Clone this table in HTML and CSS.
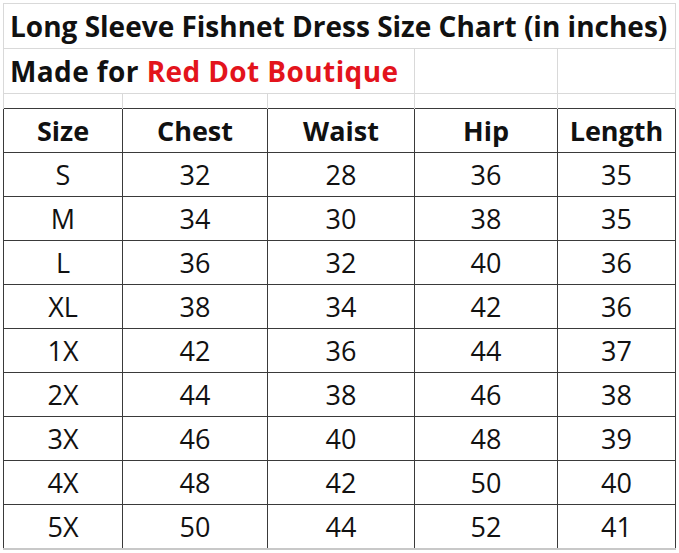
FILE: index.html
```html
<!DOCTYPE html>
<html>
<head>
<meta charset="utf-8">
<link rel="stylesheet" href="styles.css">
</head>
<body>
<table class="sheet">
  <colgroup>
    <col class="c1"><col class="c2"><col class="c3"><col class="c4"><col class="c5">
  </colgroup>
  <tr class="title-row first">
    <td colspan="5" class="title">Long Sleeve Fishnet Dress Size Chart (in inches)</td>
  </tr>
  <tr class="title-row">
    <td colspan="3" class="title subtitle">Made for <span class="red">Red Dot Boutique</span></td>
    <td></td>
    <td></td>
  </tr>
  <tr class="spacer">
    <td></td><td></td><td></td><td></td><td></td>
  </tr>
  <tr class="head">
    <td>Size</td><td>Chest</td><td>Waist</td><td>Hip</td><td>Length</td>
  </tr>
  <tr class="data"><td>S</td><td>32</td><td>28</td><td>36</td><td>35</td></tr>
  <tr class="data"><td>M</td><td>34</td><td>30</td><td>38</td><td>35</td></tr>
  <tr class="data"><td>L</td><td>36</td><td>32</td><td>40</td><td>36</td></tr>
  <tr class="data"><td>XL</td><td>38</td><td>34</td><td>42</td><td>36</td></tr>
  <tr class="data"><td>1X</td><td>42</td><td>36</td><td>44</td><td>37</td></tr>
  <tr class="data"><td>2X</td><td>44</td><td>38</td><td>46</td><td>38</td></tr>
  <tr class="data"><td>3X</td><td>46</td><td>40</td><td>48</td><td>39</td></tr>
  <tr class="data"><td>4X</td><td>48</td><td>42</td><td>50</td><td>40</td></tr>
  <tr class="data last"><td>5X</td><td>50</td><td>44</td><td>52</td><td>41</td></tr>
</table>
</body>
</html>
```

FILE: styles.css
```css
html, body {
  margin: 0;
  padding: 0;
  background: #ffffff;
}

body {
  padding: 3px 0 0 3px;
  font-family: "Open Sans", Lato, sans-serif;
  color: #111111;
}

.sheet {
  border-collapse: collapse;
  table-layout: fixed;
  width: 673px;
}

.c1 { width: 119px; }
.c2 { width: 145px; }
.c3 { width: 147px; }
.c4 { width: 143px; }
.c5 { width: 118px; }

.sheet td {
  padding: 0 0 8px 0;
  line-height: 26px;
  font-size: 27px;
  vertical-align: bottom;
  white-space: nowrap;
}

.title-row td {
  height: 35px;
  border: 1px solid #d9d9d9;
  padding-bottom: 9px;
}

.title {
  font-weight: 700;
  font-size: 28px !important;
  padding-left: 6px !important;
  text-align: left;
  overflow: visible;
}

.subtitle {
  letter-spacing: 0.4px;
}

.red {
  color: #e3141c;
}

.spacer td {
  height: 14px;
  padding: 0;
  border-left: 1px solid #d9d9d9;
  border-right: 1px solid #d9d9d9;
  border-bottom: none;
  line-height: 0;
}

.head td,
.data td {
  height: 35px;
  border: 1px solid #3a3a3a;
  text-align: center;
}

.head td {
  font-weight: 700;
}

.data.last td {
  border-bottom: 2px solid #c8c8c8;
}
```
